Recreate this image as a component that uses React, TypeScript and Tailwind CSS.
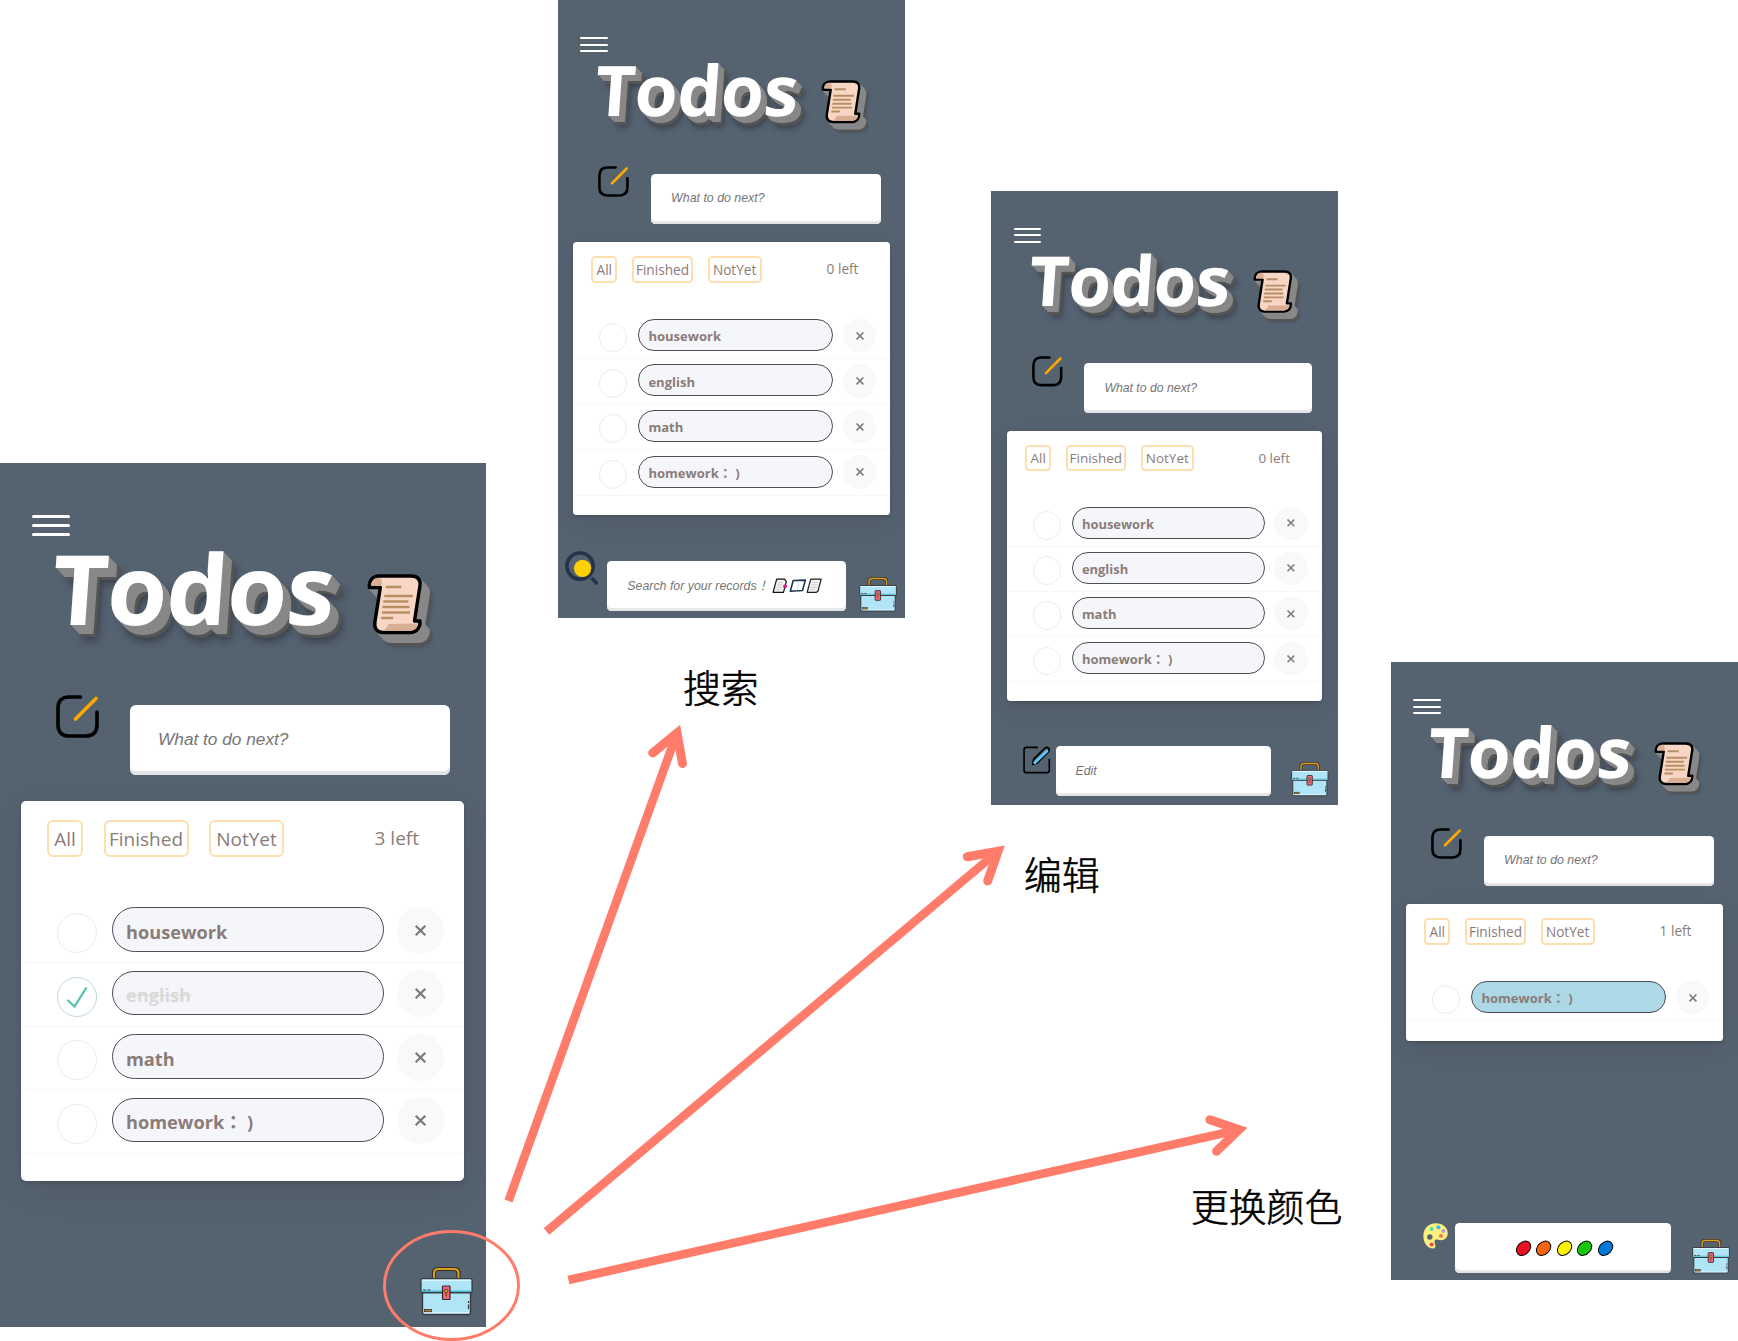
import React from "react";

type Todo = { text: string; done?: boolean };

const todos: Todo[] = [
  { text: "housework" },
  { text: "english" },
  { text: "math" },
  { text: "homework： )" },
];

const SCROLL_OUTLINE =
  "M2 13.5 C1 6 5 2 11 2 H43 C50 2 53 6 52.5 12 L49.5 47 H55 C56 54 52 58.5 46 58.5 H19 C12.500 58.500 9.500 54 10 48 L13 13.500 Z";

function ScrollIcon() {
  return (
    <svg className="block h-[78px] w-[78px] overflow-visible" viewBox="0 0 78 78" fill="none">
      <defs>
        <filter id="soft" x="-30%" y="-30%" width="170%" height="170%">
          <feGaussianBlur stdDeviation="2" />
        </filter>
      </defs>
      <path d={SCROLL_OUTLINE} transform="translate(13 14)" fill="#33383f" opacity="0.5" filter="url(#soft)" />
      <path d={SCROLL_OUTLINE} transform="translate(11 12)" fill="#555" stroke="#555" strokeWidth="3" strokeLinejoin="round" />
      {[1, 2, 3, 4, 5, 6, 7, 8, 9].map((n) => (
        <path
          key={n}
          d={SCROLL_OUTLINE}
          transform={`translate(${n} ${n})`}
          fill="#888"
          stroke="#888"
          strokeWidth="3"
          strokeLinejoin="round"
        />
      ))}
      <path d={SCROLL_OUTLINE} fill="#f7d7c4" stroke="#000" strokeWidth="3.4" strokeLinejoin="round" />
      <path d="M3.700 11.500 C3.500 6.500 7 3.700 11 3.700 C14 5 15 8 13.500 11.800 Z" fill="#d9ae92" />
      <path d="M17 56.800 C21 56.500 23 53 23.500 50 L53.300 49.500 C53 54 50 56.800 46 56.800 Z" fill="#d9ae92" />
      <path
        d="M18.500 13 H34 M17.500 22 H46 M17 27.500 H42 M16.500 33 H43.500 M16.500 38.500 H44.500 M16 44 H28"
        stroke="#b98e63"
        strokeWidth="2.700"
      />
    </svg>
  );
}

function ComposeIcon() {
  return (
    <svg className="block h-[43px] w-[43px] shrink-0 overflow-visible" viewBox="0 0 43 43" fill="none" strokeLinecap="round">
      <path d="M24.500 2 H13 C6 2 2 6 2 13 V30 C2 37 6 41 13 41 H30 C37 41 41 37 41 30 V17" stroke="#000" strokeWidth="3.600" />
      <path d="M40 3.500 L19.500 24" stroke="#ffa800" strokeWidth="3.600" />
    </svg>
  );
}

function BriefcaseIcon() {
  return (
    <svg className="block h-[49px] w-[53px] overflow-visible" viewBox="0 0 53 49" fill="none">
      <path d="M14 11 V6.500 C14 3.500 15.500 2 18.500 2 H34 C37 2 38.500 3.500 38.500 6.500 V11" stroke="#3a2f28" strokeWidth="4.200" />
      <path d="M14 11 V6.500 C14 3.500 15.500 2 18.500 2 H34 C37 2 38.500 3.500 38.500 6.500 V11" stroke="#d9a11e" strokeWidth="2" />
      <rect x="2.500" y="24" width="48" height="23.500" rx="2" fill="#b0e5f8" stroke="#3b3a3f" strokeWidth="1.400" />
      <path d="M4 45.800 H49" stroke="#e6f9ff" strokeWidth="1" />
      <rect x="0.900" y="11.800" width="51.200" height="14" rx="1.500" fill="#b0e5f8" stroke="#3b3a3f" strokeWidth="1.400" />
      <path d="M2 13.200 H51" stroke="#e6f9ff" strokeWidth="1.200" />
      <path d="M2 24.200 H51" stroke="#49bdd6" strokeWidth="1.400" />
      <rect x="22.500" y="19" width="7.500" height="13.500" rx="0.800" fill="#ee6580" stroke="#3b2630" strokeWidth="1.200" />
      <circle cx="26.200" cy="24" r="1.700" fill="#e7ae2a" stroke="#3b2630" strokeWidth="0.800" />
      <path d="M26.200 25 V29.500" stroke="#8a4a1c" strokeWidth="1.400" />
      <path d="M3 23 H6 M7.500 23 H10.500 M48.500 34 V36 M48.500 37.500 V42" stroke="#3b3a3f" strokeWidth="1.200" />
      <rect x="4.500" y="42.500" width="7" height="2.200" fill="#b5862a" stroke="#3b2f20" strokeWidth="0.800" />
    </svg>
  );
}

function SearchIcon() {
  return (
    <svg className="block h-[48px] w-[47px] overflow-visible" viewBox="0 0 47 48" fill="none">
      <circle cx="21" cy="21" r="18.300" stroke="#26324a" strokeWidth="5" />
      <circle cx="24.500" cy="24.200" r="12" fill="#ffd000" />
      <path d="M38.500 39 L43.800 44.500" stroke="#26324a" strokeWidth="5" strokeLinecap="round" />
    </svg>
  );
}

function PencilBoxIcon() {
  return (
    <svg className="block h-[39px] w-[39px] overflow-visible" viewBox="0 0 39 39" fill="none" strokeLinecap="round" strokeLinejoin="round">
      <path d="M20 2 H5 C3 2 1.500 3.500 1.500 5.500 V34 C1.500 36 3 37.500 5 37.500 H33.500 C35.500 37.500 37 36 37 34 V19" stroke="#000" strokeWidth="2.300" />
      <path d="M13.500 26 L15 18.500 L31 2.800 C35 0.500 38.500 4 36 8 L20.500 23.500 Z" stroke="#000" strokeWidth="2.300" />
      <path d="M16.500 23.500 L33.500 7.500" stroke="#5ccaff" strokeWidth="4" />
    </svg>
  );
}

function PaletteIcon() {
  return (
    <svg className="block h-[36px] w-[35px] overflow-visible" viewBox="0 0 35 36">
      <path
        fillRule="evenodd"
        d="M18 0.500 C7 0.500 0.500 9 0.500 18 C0.500 28 7 35.500 13.500 35.500 C18 35.500 18 31 16.500 28.500 C15 25.500 16.500 22 20.500 23 C28 26 34.500 21 34.500 14.500 C34.500 6 27 0.500 18 0.500 Z M9.500 15.700 A3.800 3.800 0 1 1 9.500 23.300 A3.800 3.800 0 1 1 9.500 15.700 Z"
        fill="#fdf07e"
      />
      <circle cx="12" cy="8.500" r="2.800" fill="#4fe0a4" />
      <circle cx="21.500" cy="6" r="2.800" fill="#35bdf4" />
      <circle cx="28.500" cy="11" r="2.800" fill="#b79ae8" />
      <circle cx="25" cy="18" r="2.700" fill="#ee7350" />
      <circle cx="12" cy="30" r="2.800" fill="#f5455a" />
    </svg>
  );
}

function RecordIcons() {
  return (
    <svg className="block h-[22px] w-[70px] overflow-visible" viewBox="0 0 70 22" fill="none" strokeLinejoin="round">
      <path d="M6.500 1.500 H17.500 L20 5 L16 20 H1.500 Z" fill="#f1f1f1" stroke="#111" strokeWidth="1.700" />
      <path d="M8.500 6 H15 M7.500 9.500 H14 M6.500 13 H13 M5.500 16.500 H11" stroke="#c4c4c4" strokeWidth="1" />
      <path d="M15.500 11.500 H21 M18 9 V14.500" stroke="#d6138a" strokeWidth="3" />
      <path d="M29.500 3.500 L46.500 3 L42.500 17.500 L25.500 18.500 Z" fill="#fff" stroke="#1d3550" strokeWidth="2.200" />
      <path d="M38 4 L34 18" stroke="#c9d6e2" strokeWidth="1" />
      <path d="M54 1.500 H68.500 L64 18.500 L62 20 H49 Z" fill="#f1f1f1" stroke="#222" strokeWidth="1.700" />
      <path d="M56 6 H64 M55 9.500 H63 M54 13 H62 M53 16.500 H60" stroke="#c4c4c4" strokeWidth="1" />
    </svg>
  );
}

function Field({ className, children }: { className: string; children: React.ReactNode }) {
  return (
    <div
      className={`flex h-[70px] shrink-0 items-center rounded-[6px] bg-white font-['Liberation_Sans','Noto_Sans_CJK_TC',sans-serif] text-[17.25px] text-[#757575] italic shadow-[inset_0_-4px_0_#e4e4e4] whitespace-pre ${className}`}
    >
      {children}
    </div>
  );
}

function Filter({ className, children }: { className: string; children: React.ReactNode }) {
  return (
    <div className={`flex h-[37px] items-center justify-center rounded-[6px] border-[2.85px] border-[#ffdeae] ${className}`}>
      {children}
    </div>
  );
}

function TodoRow({ todo, pill }: { todo: Todo; pill: string }) {
  return (
    <li className="flex h-[63.5px] items-start border-b-[1.5px] border-[#f7f7f7] pl-[36px]">
      <div
        className={`mt-[13.5px] flex h-[40px] w-[40px] items-center justify-center rounded-full border ${todo.done ? "border-[#bddad5]" : "border-[#ededed]"}`}
      >
        {todo.done && (
          <svg className="h-[22px] w-[22px]" viewBox="0 0 22 22" fill="none">
            <path d="M1.500 14 L8.500 20.500 L20.500 1.500" stroke="#55c0ac" strokeWidth="2.300" />
          </svg>
        )}
      </div>
      <div
        className={`mt-[7.4px] ml-[15px] flex h-[44.6px] w-[272px] items-center rounded-full border border-[#4c4d55] pt-[5.5px] pl-[13px] text-[18.2px] font-bold whitespace-pre ${pill} ${todo.done ? "text-[#d9d9d9] line-through" : ""}`}
      >
        {todo.text}
      </div>
      <div className="mt-[7px] ml-[13px] flex h-[47px] w-[47px] items-center justify-center rounded-full bg-[#f9f9f9]">
        <svg className="h-[11px] w-[11px] overflow-visible" viewBox="0 0 11 11">
          <path d="M0.700 0.700 L10.300 10.300 M10.300 0.700 L0.700 10.300" stroke="#7a7a7a" strokeWidth="2.200" />
        </svg>
      </div>
    </li>
  );
}

type PhoneProps = {
  frame: string;
  scale: string;
  items: Todo[];
  left: number;
  pill?: string;
  children?: React.ReactNode;
};

function Phone({ frame, scale, items, left, pill = "bg-[#f5f6fa]", children }: PhoneProps) {
  return (
    <section className={`absolute overflow-hidden bg-[#556270] ${frame}`}>
      <div className={`flex h-[852px] w-[486px] flex-col ${scale}`}>
        <div className="mt-[51.5px] ml-[31.5px] flex w-[38px] flex-col gap-[6.200px]">
          <span className="h-[3px] rounded-full bg-white" />
          <span className="h-[3px] rounded-full bg-white" />
          <span className="h-[3px] rounded-full bg-white" />
        </div>
        <h1 className="mt-[3.5px] ml-[49px] flex h-[96px] origin-bottom-left -skew-x-4 items-start font-['Open_Sans',sans-serif] text-[97px] leading-[96px] font-bold text-white [text-shadow:1px_1px_#888,2px_2px_#888,3px_3px_#888,4px_4px_#888,5px_5px_#888,6px_6px_#888,7px_7px_#888,8px_8px_#888,9px_9px_#888,10px_10px_#555,11px_11px_#555,12px_12px_#555,13px_15px_9px_rgba(30,35,45,0.6)]">
          <span className="w-[314.5px] tracking-[-0.7px]">Todos</span>
          <span className="mt-[35px]">
            <ScrollIcon />
          </span>
        </h1>
        <div className="mt-[59.5px] ml-[56px] flex items-start">
          <ComposeIcon />
          <Field className="mt-[10px] ml-[31px] w-[320px] pl-[28px]">What to do next?</Field>
        </div>
        <div className="mt-[26px] ml-[21px] w-[442.5px] rounded-[5px] bg-white pb-[27px] font-['Open_Sans','Noto_Sans_CJK_TC',sans-serif] text-[#8a7c79] shadow-[0_2px_4px_rgba(0,0,0,0.12),0_10px_40px_rgba(0,0,0,0.08)]">
          <div className="flex h-[99px] items-start gap-[20.5px] pt-[19.5px] pr-[44.5px] pl-[26px] text-[19px]">
            <Filter className="w-[36px]">All</Filter>
            <Filter className="w-[85px]">Finished</Filter>
            <Filter className="w-[75px]">NotYet</Filter>
            <span className="ml-auto leading-[37px]">{left} left</span>
          </div>
          <ul>
            {items.map((t) => (
              <TodoRow key={t.text} todo={t} pill={pill} />
            ))}
          </ul>
        </div>
        <footer className="mt-auto flex h-[71px] items-start">
          {children}
          <span className="mt-[22.500px] mr-[13px] ml-auto">
            <BriefcaseIcon />
          </span>
        </footer>
      </div>
    </section>
  );
}

function Swatch({ className }: { className: string }) {
  return <span className={`h-[17.5px] w-[23px] -rotate-45 rounded-[50%] border border-black ${className}`} />;
}

function Arrows() {
  return (
    <svg className="absolute inset-0 h-[1341px] w-[1738px]" viewBox="0 0 1738 1341" fill="none" stroke="#ff7c6b">
      <g strokeWidth="8.600">
        <path d="M508.500 1201 L677 733" />
        <path d="M546.500 1231.500 L998 851.300" />
        <path d="M568.500 1280 L1239 1129.700" />
      </g>
      <g strokeWidth="9" strokeLinecap="round" strokeLinejoin="miter">
        <path d="M652.700 753 L677 733 L682.500 763.500" />
        <path d="M967.300 856.700 L998 851.300 L987.700 881" />
        <path d="M1209.900 1119.700 L1239 1129.700 L1216.500 1151.300" />
      </g>
      <ellipse cx="451.500" cy="1285.500" rx="67" ry="54" strokeWidth="3" />
    </svg>
  );
}

const label =
  "absolute font-['Noto_Sans_CJK_SC',sans-serif] text-[37.8px] leading-[48px] font-light text-black whitespace-nowrap [-webkit-text-stroke:0.6px_black]";

export default function App() {
  return (
    <main className="relative h-[1341px] w-[1738px] overflow-hidden bg-white">
      <Phone
        frame="top-[463px] left-0 h-[864px] w-[486px]"
        scale="[zoom:1]"
        left={3}
        items={todos.map((t) => (t.text === "english" ? { ...t, done: true } : t))}
      />

      <Phone frame="top-0 left-[558px] h-[618px] w-[347px]" scale="-ml-[0.5px] [zoom:0.718]" left={0} items={todos}>
        <span className="-mt-[14px] ml-[10.5px]">
          <SearchIcon />
        </span>
        <Field className="ml-[11.5px] w-[333px] pl-[28px]">
          Search for your records！ <RecordIcons />
        </Field>
      </Phone>

      <Phone frame="top-[191px] left-[991px] h-[614px] w-[347px]" scale="ml-[1.5px] [zoom:0.711]" left={0} items={todos}>
        <span className="ml-[43.5px]">
          <PencilBoxIcon />
        </span>
        <Field className="ml-[7px] w-[303px] pl-[28px]">Edit</Field>
      </Phone>

      <Phone
        frame="top-[662px] left-[1391px] h-[618px] w-[347px]"
        scale="-ml-[0.5px] [zoom:0.718]"
        left={1}
        items={todos.slice(3)}
        pill="bg-[#add8e6]"
      >
        <span className="mt-[1px] ml-[45px]">
          <PaletteIcon />
        </span>
        <Field className="ml-[9px] w-[301px] justify-center gap-[5.500px] pl-[4px]">
          <Swatch className="bg-[#eb1022]" />
          <Swatch className="bg-[#f8650c]" />
          <Swatch className="bg-[#fff200]" />
          <Swatch className="bg-[#16c60c]" />
          <Swatch className="bg-[#0078d7]" />
        </Field>
      </Phone>

      <Arrows />

      <p className={`${label} top-[662px] left-[683px]`}>搜索</p>
      <p className={`${label} top-[849px] left-[1024px]`}>编辑</p>
      <p className={`${label} top-[1181px] left-[1191px]`}>更换颜色</p>
    </main>
  );
}
